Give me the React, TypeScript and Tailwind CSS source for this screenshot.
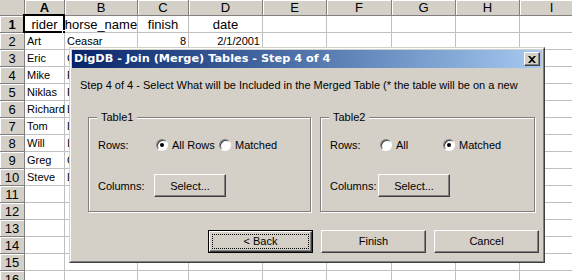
import React from "react";

const cols = [
  { key: "A", w: "w-[40px]" },
  { key: "B", w: "w-[73px]" },
  { key: "C", w: "w-[51px]" },
  { key: "D", w: "w-[74px]" },
  { key: "E", w: "w-[64px]" },
  { key: "F", w: "w-[65px]" },
  { key: "G", w: "w-[64px]" },
  { key: "H", w: "w-[64px]" },
  { key: "I", w: "w-[64px]" },
];

type Cell = { t: string; align?: "l" | "c" | "r" };

const data: Cell[][] = [
  [{ t: "rider", align: "c" }, { t: "horse_name", align: "c" }, { t: "finish", align: "c" }, { t: "date", align: "c" }],
  [{ t: "Art" }, { t: "Ceasar" }, { t: "8", align: "r" }, { t: "2/1/2001", align: "r" }],
  [{ t: "Eric" }, { t: "Comet" }],
  [{ t: "Mike" }, { t: "Fury" }],
  [{ t: "Niklas" }, { t: "Firefly" }],
  [{ t: "Richard" }, { t: "Lightning" }],
  [{ t: "Tom" }, { t: "Lucky" }],
  [{ t: "Will" }, { t: "Ike" }],
  [{ t: "Greg" }, { t: "Cody" }],
  [{ t: "Steve" }, { t: "Lad" }],
];

const alignCls = { l: "justify-start pl-[2px]", c: "justify-center", r: "justify-end pr-[2px]" };

function Sheet() {
  return (
    <div className="font-['Liberation_Sans',Arial,sans-serif] text-[13px] text-black">
      {/* column headers */}
      <div className="flex h-[16px]">
        <div className="w-[25px] shrink-0 bg-[#d4d0c8] border-r border-b border-[#808080]" />
        {cols.map((c) => (
          <div
            key={c.key}
            className={`${c.w} shrink-0 bg-[#d4d0c8] border-r border-b border-[#808080] shadow-[inset_1px_1px_0_#fff] flex items-center justify-center leading-none ${c.key === "A" ? "font-bold" : ""}`}
          >
            {c.key}
          </div>
        ))}
      </div>
      {Array.from({ length: 16 }).map((_, r) => (
        <div key={r} className="flex h-[17px]">
          <div
            className={`w-[25px] shrink-0 bg-[#d4d0c8] border-r border-b border-[#808080] shadow-[inset_1px_1px_0_#fff] flex items-center justify-center leading-none ${r === 0 ? "font-bold" : ""}`}
          >
            {r + 1}
          </div>
          {cols.map((c, ci) => {
            const cell = data[r]?.[ci];
            return (
              <div
                key={c.key}
                className={`${c.w} shrink-0 border-r border-b border-[#c0c0c0] bg-white flex items-center whitespace-nowrap overflow-visible leading-none relative ${r === 0 ? "text-[13px]" : "text-[11px]"} ${alignCls[cell?.align ?? "l"]}`}
              >
                {cell?.t}
                {r === 0 && ci === 0 && (
                  <div className="absolute left-[-2px] top-[-2px] w-[42px] h-[19px] border-2 border-black">
                    <div className="absolute right-[-4px] bottom-[-4px] w-[5px] h-[5px] bg-black border border-white" />
                  </div>
                )}
              </div>
            );
          })}
        </div>
      ))}
    </div>
  );
}

function Radio({ checked }: { checked?: boolean }) {
  return (
    <span className="relative w-[12px] h-[12px] shrink-0 rounded-full bg-white border border-t-[#808080] border-l-[#808080] border-r-white border-b-white shadow-[inset_1px_1px_0_#404040] flex items-center justify-center">
      {checked && <span className="w-[4px] h-[4px] rounded-full bg-black" />}
    </span>
  );
}

function Btn({ children, className = "", focus = false }: { children: React.ReactNode; className?: string; focus?: boolean }) {
  if (focus) {
    return (
      <div className={`h-[23px] border border-black ${className}`}>
        <div className="h-full border border-t-white border-l-white border-r-[#404040] border-b-[#404040] shadow-[inset_-1px_-1px_0_#808080] p-[2px]">
          <div className="h-full border border-dotted border-black flex items-center justify-center">{children}</div>
        </div>
      </div>
    );
  }
  return (
    <div
      className={`h-[23px] border border-t-white border-l-white border-r-[#404040] border-b-[#404040] shadow-[inset_-1px_-1px_0_#808080] flex items-center justify-center ${className}`}
    >
      {children}
    </div>
  );
}

function Group({
  title,
  w,
  labelW,
  colLabelW,
  opt1,
  opt1W,
  opt1Checked,
}: {
  title: string;
  w: string;
  labelW: string;
  colLabelW: string;
  opt1: string;
  opt1W: string;
  opt1Checked: boolean;
}) {
  return (
    <div className={`relative ${w} h-[95px] border border-[#808080] shadow-[inset_1px_1px_0_#fff,1px_1px_0_#fff] pt-[20px] pl-[9px]`}>
      <span className="absolute left-[8px] top-[-8px] px-[4px] bg-[#d4d0c8] leading-[14px]">{title}</span>
      <div className="flex items-center h-[14px]">
        <span className={`${labelW} shrink-0`}>Rows:</span>
        <div className={`flex items-center gap-[4px] ${opt1W} shrink-0`}>
          <Radio checked={opt1Checked} />
          <span>{opt1}</span>
        </div>
        <div className="flex items-center gap-[4px]">
          <Radio checked={!opt1Checked} />
          <span>Matched</span>
        </div>
      </div>
      <div className="flex items-center mt-[22px]">
        <span className={`${colLabelW} shrink-0`}>Columns:</span>
        <Btn className="w-[72px]">Select...</Btn>
      </div>
    </div>
  );
}

function Dialog() {
  return (
    <div className="absolute left-[69px] top-[47px] w-[476px] h-[216px] bg-[#d4d0c8] border border-t-[#d4d0c8] border-l-[#d4d0c8] border-r-[#404040] border-b-[#404040] font-['Liberation_Sans',Arial,sans-serif] text-[11px] text-black">
      <div className="h-full border border-t-white border-l-white border-r-[#808080] border-b-[#808080] p-[1px] flex flex-col">
        <div className="h-[18px] shrink-0 bg-gradient-to-r from-[#0a246a] to-[#a6caf0] flex items-center justify-between pl-[2px] pr-[2px]">
          <span className="text-white font-bold font-['DejaVu_Sans',sans-serif] text-[11.3px]">DigDB - Join (Merge) Tables - Step 4 of 4</span>
          <div className="w-[16px] h-[14px] bg-[#d4d0c8] border border-t-white border-l-white border-r-[#404040] border-b-[#404040] shadow-[inset_-1px_-1px_0_#808080] flex items-center justify-center">
            <svg width="8" height="7" viewBox="0 0 8 7">
              <path d="M0 0h2l2 2 2-2h2L5 3.5 8 7H6L4 5 2 7H0l3-3.5z" fill="#000" />
            </svg>
          </div>
        </div>
        <div className="pt-[10px] pl-[8px] leading-[14px] whitespace-nowrap">
          Step 4 of 4 - Select What will be Included in the Merged Table (* the table will be on a new
        </div>
        <div className="flex gap-[9px] ml-[16px] mt-[25px] leading-[14px]">
          <Group title="Table1" w="w-[223px]" labelW="w-[58px]" colLabelW="w-[56px]" opt1="All Rows" opt1W="w-[63px]" opt1Checked />
          <Group title="Table2" w="w-[215px]" labelW="w-[50px]" colLabelW="w-[48px]" opt1="All" opt1W="w-[63px]" opt1Checked={false} />
        </div>
        <div className="flex gap-[8px] ml-[136px] mt-[18px]">
          <Btn focus className="w-[105px]">&lt; Back</Btn>
          <Btn className="w-[105px]">Finish</Btn>
          <Btn className="w-[105px]">Cancel</Btn>
        </div>
      </div>
    </div>
  );
}

export default function App() {
  return (
    <div className="relative w-[572px] h-[280px] overflow-hidden bg-white">
      <Sheet />
      <Dialog />
    </div>
  );
}
